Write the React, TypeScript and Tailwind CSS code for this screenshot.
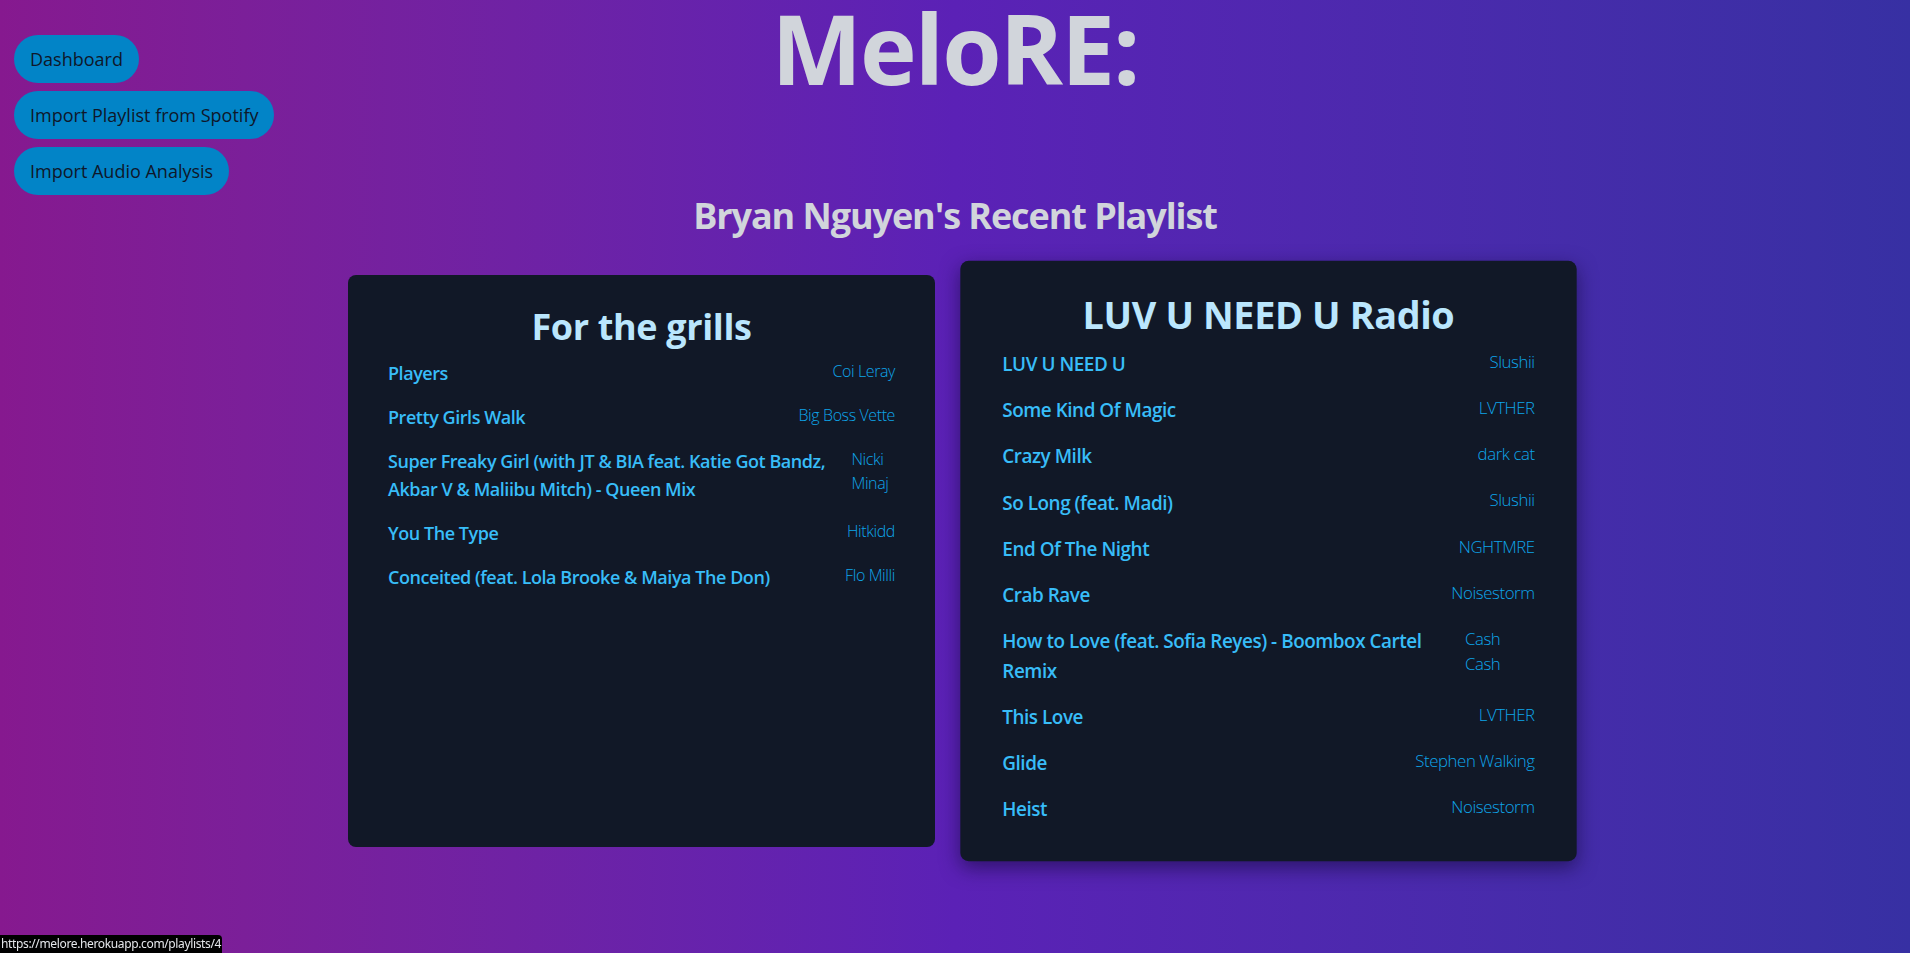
import React from "react";

const playlists = [
  {
    id: 3,
    name: "For the grills",
    tracks: [
      { title: "Players", artist: "Coi Leray" },
      { title: "Pretty Girls Walk", artist: "Big Boss Vette" },
      { title: "Super Freaky Girl (with JT & BIA feat. Katie Got Bandz, Akbar V & Maliibu Mitch) - Queen Mix", artist: "Nicki Minaj" },
      { title: "You The Type", artist: "Hitkidd" },
      { title: "Conceited (feat. Lola Brooke & Maiya The Don)", artist: "Flo Milli" },
    ],
  },
  {
    id: 4,
    name: "LUV U NEED U Radio",
    tracks: [
      { title: "LUV U NEED U", artist: "Slushii" },
      { title: "Some Kind Of Magic", artist: "LVTHER" },
      { title: "Crazy Milk", artist: "dark cat" },
      { title: "So Long (feat. Madi)", artist: "Slushii" },
      { title: "End Of The Night", artist: "NGHTMRE" },
      { title: "Crab Rave", artist: "Noisestorm" },
      { title: "How to Love (feat. Sofia Reyes) - Boombox Cartel Remix", artist: "Cash Cash" },
      { title: "This Love", artist: "LVTHER" },
      { title: "Glide", artist: "Stephen Walking" },
      { title: "Heist", artist: "Noisestorm" },
    ],
  },
];

const navLinks = ["Dashboard", "Import Playlist from Spotify", "Import Audio Analysis"];

function PlaylistCard({ playlist, hovered }: { playlist: (typeof playlists)[number]; hovered?: boolean }) {
  return (
    <div
      className={`w-[587px] bg-[#111827] rounded-lg pt-8 pb-9 px-10 ${
        hovered ? "scale-105 shadow-[0_6px_18px_rgba(20,10,60,0.6)]" : ""
      }`}
    >
      <h3 className="text-4xl font-bold text-[#bae6fd] text-center mb-3 tracking-[-0.01em]">{playlist.name}</h3>
      <ul className="flex flex-col gap-4">
        {playlist.tracks.map((t) => (
          <li key={t.title} className="flex justify-between items-start gap-4">
            <span className="text-lg font-semibold text-[#38bdf8] tracking-[-0.025em]">{t.title}</span>
            <span className="text-base font-light text-[#0ea5e9] tracking-[-0.025em]">{t.artist}</span>
          </li>
        ))}
      </ul>
    </div>
  );
}

export default function App() {
  return (
    <div
      className="min-h-screen bg-linear-to-r from-[#86198f] via-[#5b21b6] to-[#3730a3] text-[#d1d5db]"
      style={{ fontFamily: '"Open Sans", "Noto Sans", sans-serif' }}
    >
      {/* header: nav on the left, logo centred */}
      <div className="grid grid-cols-[1fr_auto_1fr]">
        <nav className="flex flex-col items-start gap-2 pt-[35px] pl-[14px]">
          {navLinks.map((l) => (
            <a key={l} href="#" className="bg-[#0284c7] text-[#0f172a] text-lg rounded-full px-4 py-2.5">
              {l}
            </a>
          ))}
        </nav>
        <h1 className="text-8xl font-bold leading-none tracking-[-0.02em]">MeloRE:</h1>
        <div />
      </div>

      <h2 className="text-4xl font-bold text-center mt-px tracking-[-0.03em]">Bryan Nguyen's Recent Playlist</h2>

      <div className="flex justify-center items-stretch gap-10 mt-[39px]">
        <PlaylistCard playlist={playlists[0]} />
        <PlaylistCard playlist={playlists[1]} hovered />
      </div>

      <div
        className="fixed bottom-0 left-0 bg-black text-gray-200 text-xs px-px leading-[18px] tracking-[-0.03em] rounded-tr-sm"
        style={{ fontFamily: '"Noto Sans", sans-serif' }}
      >
        https://melore.herokuapp.com/playlists/4
      </div>
    </div>
  );
}
